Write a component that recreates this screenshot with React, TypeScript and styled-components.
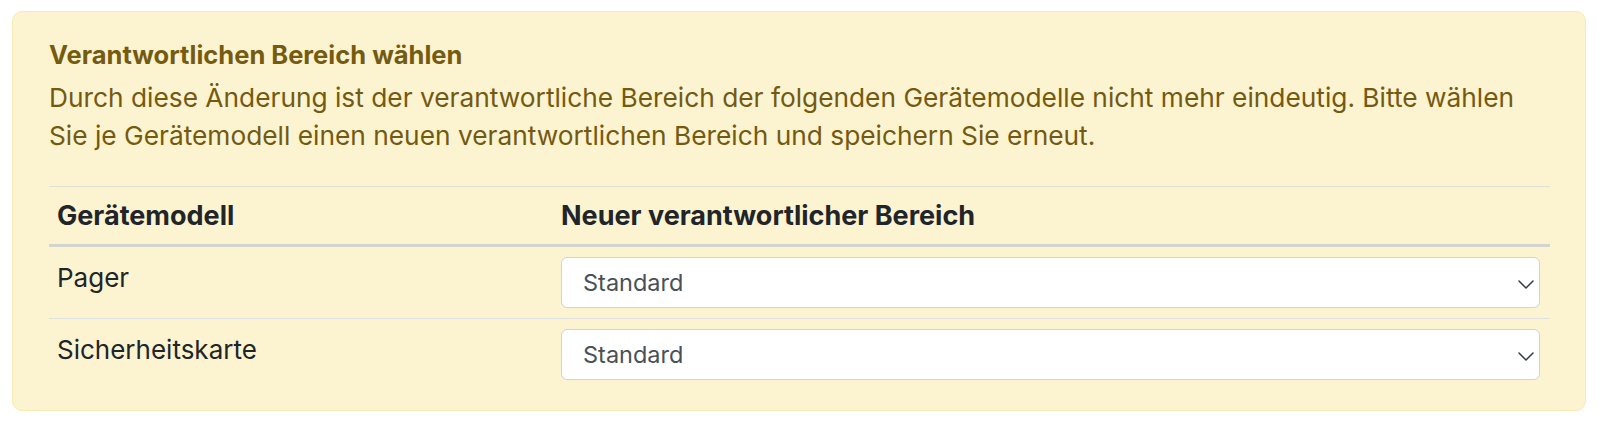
import React from "react";
import styled, { createGlobalStyle } from "styled-components";

const GlobalStyle = createGlobalStyle`
  html, body {
    margin: 0;
    padding: 0;
    background: #ffffff;
  }
  body {
    font-family: Inter, "Noto Sans", "Liberation Sans", sans-serif;
    -webkit-font-smoothing: antialiased;
  }
`;

const Page = styled.div`
  padding: 11px 14px 14px 12px;
`;

const Alert = styled.section`
  background: #fcf3d0;
  border: 1px solid #f9eab4;
  border-radius: 10px;
  padding: 24px 35px 20px 36px;
  color: #735a10;
`;

const Heading = styled.h4`
  margin: 0;
  font-size: 25.5px;
  line-height: 38px;
  font-weight: 700;
  color: #755b0f;
`;

const Message = styled.p`
  margin: 5px 0 31px;
  font-size: 26.3px;
  line-height: 38px;
  font-weight: 400;
`;

const Table = styled.table`
  width: 100%;
  border-collapse: collapse;
  table-layout: fixed;
  border-top: 1px solid #dfdfd6;
  color: #212529;
`;

const HeadCell = styled.th<{ $width?: number }>`
  width: ${(p) => (p.$width ? `${p.$width}px` : "auto")};
  text-align: left;
  padding: 10px 8px 9px;
  font-size: 27px;
  line-height: 38px;
  font-weight: 700;
  border-bottom: 3px solid #d3d3d0;
`;

const Row = styled.tr<{ $last?: boolean }>`
  border-bottom: ${(p) => (p.$last ? "none" : "1px solid #dfe1e3")};
`;

const Cell = styled.td<{ $label?: boolean }>`
  vertical-align: top;
  padding: ${(p) => (p.$label ? "12px 8px 10px" : "10px 10px 10px 8px")};
  font-size: 26px;
  line-height: 38px;
  font-weight: 400;
`;

const SelectWrap = styled.div`
  position: relative;
`;

const Select = styled.select`
  display: block;
  width: 100%;
  height: 51px;
  box-sizing: border-box;
  appearance: none;
  -webkit-appearance: none;
  background: #ffffff;
  border: 1px solid #cfd2d6;
  border-radius: 6px;
  padding: 0 48px 0 21px;
  font-family: inherit;
  font-size: 23.5px;
  color: #495057;
  outline: none;
`;

const Chevron = styled.svg`
  position: absolute;
  right: 6px;
  top: 50%;
  width: 16px;
  height: 9px;
  margin-top: -3px;
  pointer-events: none;
`;

type Model = { name: string; area: string };

const models: Model[] = [
  { name: "Pager", area: "Standard" },
  { name: "Sicherheitskarte", area: "Standard" },
];

const AreaSelect: React.FC<{ value: string }> = ({ value }) => (
  <SelectWrap>
    <Select defaultValue={value}>
      <option value="Standard">Standard</option>
    </Select>
    <Chevron viewBox="0 0 16 9" fill="none">
      <path
        d="M1 1l7 7 7-7"
        stroke="#343a40"
        strokeWidth="1.5"
        strokeLinecap="round"
        strokeLinejoin="round"
      />
    </Chevron>
  </SelectWrap>
);

export default function App() {
  return (
    <>
      <GlobalStyle />
      <Page>
        <Alert role="alert">
          <Heading>Verantwortlichen Bereich wählen</Heading>
          <Message>
            Durch diese Änderung ist der verantwortliche Bereich der folgenden
            Gerätemodelle nicht mehr eindeutig. Bitte wählen Sie je Gerätemodell
            einen neuen verantwortlichen Bereich und speichern Sie erneut.
          </Message>
          <Table>
            <thead>
              <tr>
                <HeadCell $width={488}>Gerätemodell</HeadCell>
                <HeadCell>Neuer verantwortlicher Bereich</HeadCell>
              </tr>
            </thead>
            <tbody>
              {models.map((m, i) => (
                <Row key={m.name} $last={i === models.length - 1}>
                  <Cell $label>{m.name}</Cell>
                  <Cell>
                    <AreaSelect value={m.area} />
                  </Cell>
                </Row>
              ))}
            </tbody>
          </Table>
        </Alert>
      </Page>
    </>
  );
}
